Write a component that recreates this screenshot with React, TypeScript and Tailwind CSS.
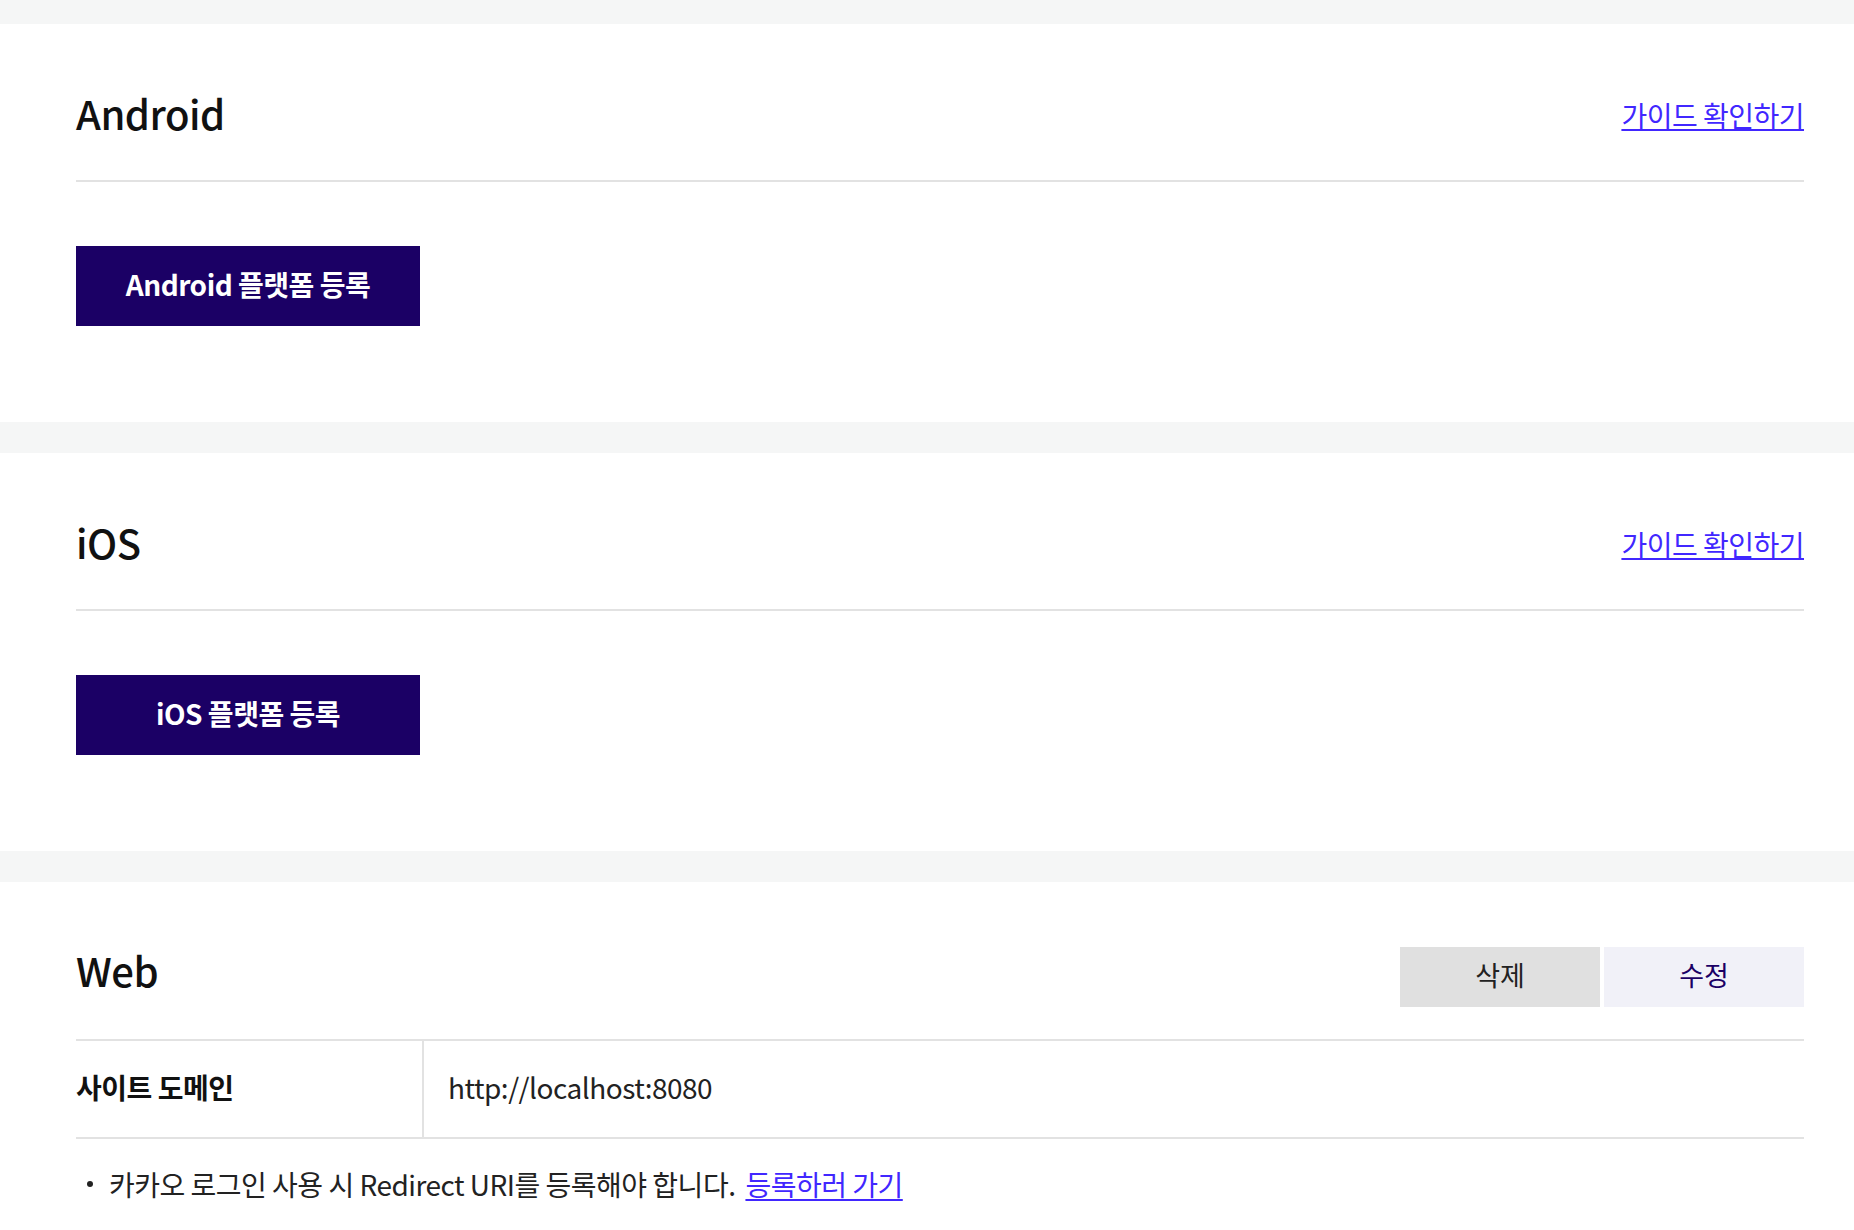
import React from "react";

const FONT = "font-['Noto_Sans_CJK_KR','Noto_Sans',sans-serif]";

interface PlatformSectionProps {
  title: string;
  buttonLabel: string;
}

const SectionHeader: React.FC<{ title: string; right: React.ReactNode }> = ({
  title,
  right,
}) => (
  <div className="flex items-end justify-between pt-[64px] pb-[42px] border-b-2 border-[#e2e2e2]">
    <h2 className="text-[40px] leading-[50px] font-medium text-[#111] tracking-[-0.5px]">
      {title}
    </h2>
    {right}
  </div>
);

const GuideLink = () => (
  <a
    href="#"
    className="text-[28px] leading-[46px] text-[#4127ff] underline underline-offset-[2px] decoration-[2px] tracking-[-0.5px]"
  >
    가이드 확인하기
  </a>
);

const PlatformSection: React.FC<PlatformSectionProps> = ({
  title,
  buttonLabel,
}) => (
  <section className="bg-white pl-[76px] pr-[50px] pb-[96px]">
    <SectionHeader title={title} right={<GuideLink />} />
    <button className="mt-[64px] w-[344px] h-[80px] pb-[4px] bg-[#1b0065] text-white text-[28px] font-bold tracking-[-0.5px] flex items-center justify-center">
      {buttonLabel}
    </button>
  </section>
);

const WebSection = () => (
  <section className="bg-white pl-[76px] pr-[50px] pb-[40px]">
    <div className="flex items-start justify-between pt-[63px] pb-[32px]">
      <h2 className="text-[40px] leading-[50px] font-medium text-[#111] tracking-[-0.5px]">
        Web
      </h2>
      <div className="flex gap-[4px] mt-[2px]">
        <button className="w-[200px] h-[60px] pb-[4px] bg-[#e0e0e0] text-[#222] text-[27px]">
          삭제
        </button>
        <button className="w-[200px] h-[60px] pb-[4px] bg-[#f1f1f8] text-[#1b0065] text-[27px]">
          수정
        </button>
      </div>
    </div>

    <div className="flex border-t-2 border-b-2 border-[#e2e2e2] h-[100px]">
      <div className="w-[346px] flex items-center pb-[4px] text-[28px] font-bold text-[#111] tracking-[-0.5px]">
        사이트 도메인
      </div>
      <div className="flex-1 flex items-center pb-[4px] pl-[24px] border-l-2 border-[#e2e2e2] text-[28px] text-[#222] tracking-[-0.5px]">
        http://localhost:8080
      </div>
    </div>

    <div className="flex items-center mt-[25px] text-[28px] leading-[40px] text-[#222] tracking-[-0.5px]">
      <span className="w-[6px] h-[6px] rounded-full bg-[#222] ml-[11px] mr-[16px]" />
      <span>카카오 로그인 사용 시 Redirect URI를 등록해야 합니다.</span>
      <a
        href="#"
        className="ml-[10px] text-[#4127ff] underline underline-offset-[3px] decoration-[2px]"
      >
        등록하러 가기
      </a>
    </div>
  </section>
);

export default function App() {
  return (
    <div className={`${FONT} min-h-screen bg-[#f5f6f6] pt-[24px] flex flex-col gap-[31px]`}>
      <PlatformSection title="Android" buttonLabel="Android 플랫폼 등록" />
      <PlatformSection title="iOS" buttonLabel="iOS 플랫폼 등록" />
      <WebSection />
    </div>
  );
}
